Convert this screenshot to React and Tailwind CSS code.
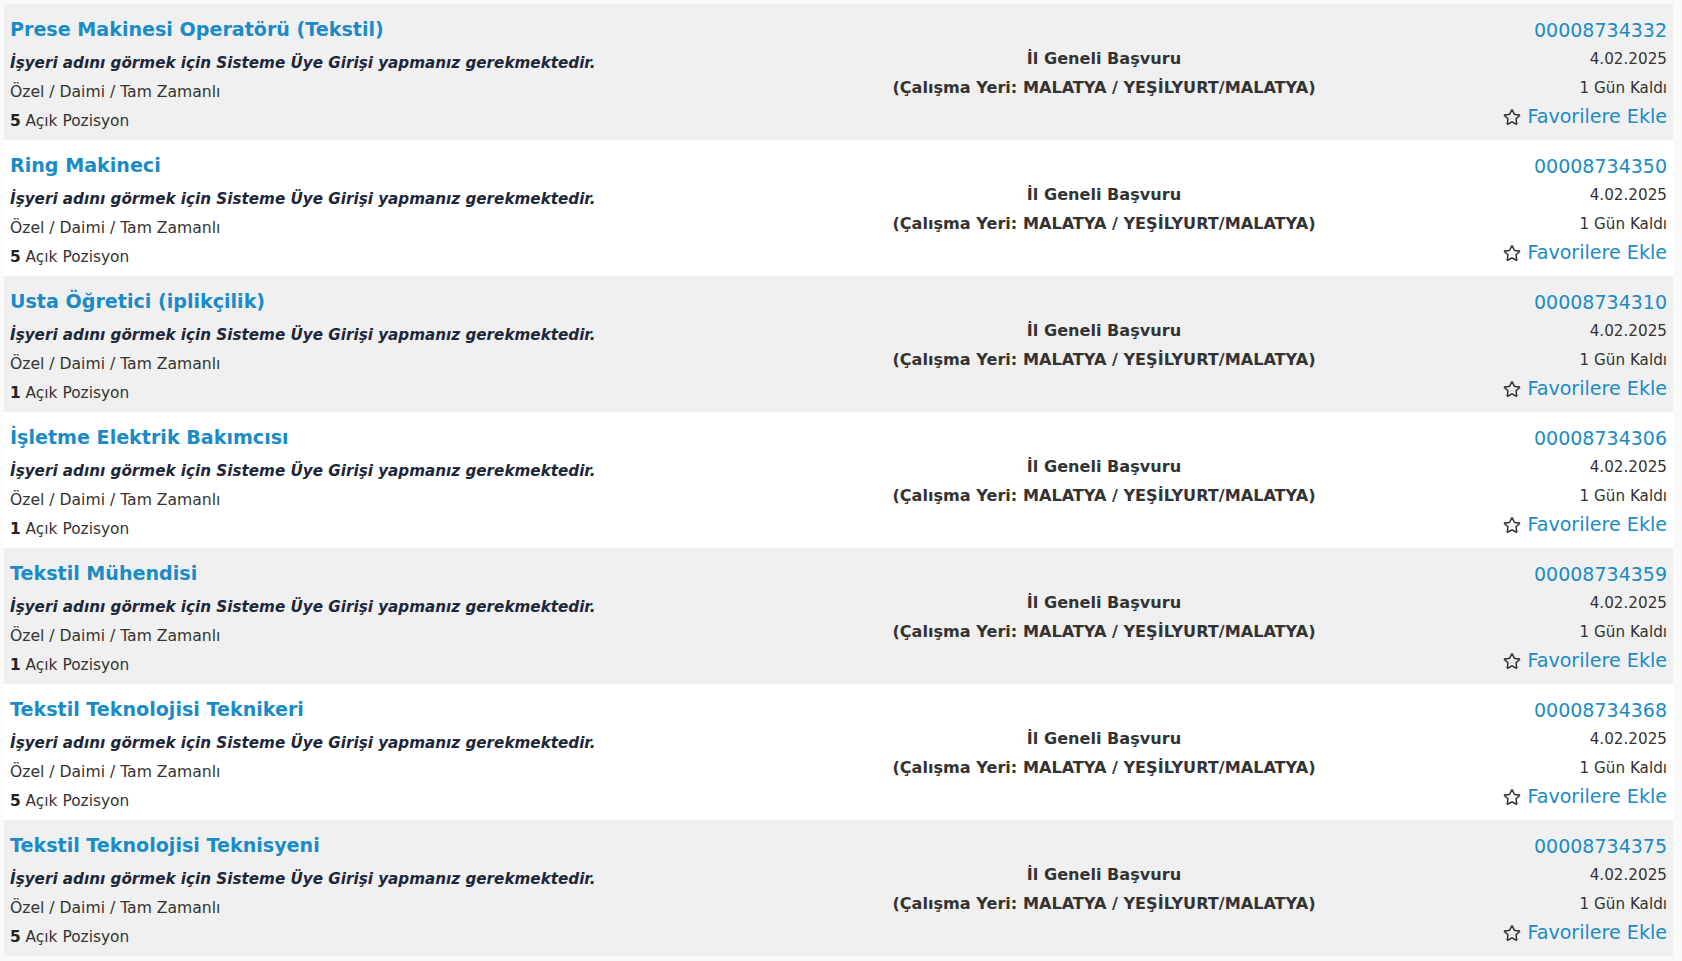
import React from 'react';
import { FaRegStar } from 'react-icons/fa';

const jobs = [
    { title: 'Prese Makinesi Operatörü (Tekstil)', id: '00008734332', count: 5 },
    { title: 'Ring Makineci', id: '00008734350', count: 5 },
    { title: 'Usta Öğretici (iplikçilik)', id: '00008734310', count: 1 },
    { title: 'İşletme Elektrik Bakımcısı', id: '00008734306', count: 1 },
    { title: 'Tekstil Mühendisi', id: '00008734359', count: 1 },
    { title: 'Tekstil Teknolojisi Teknikeri', id: '00008734368', count: 5 },
    { title: 'Tekstil Teknolojisi Teknisyeni', id: '00008734375', count: 5 },
];

const JobRow = ({ job, odd }) => (
    <div
        className={`grid grid-cols-[821px_546px_1fr] h-[136px] px-[6px] ${odd ? 'bg-[#f0f0f0]' : 'bg-white'}`}
    >
        <div className="pt-[11px]">
            <a href="#" className="block text-[19.1px] leading-[30px] font-bold text-[#1a8bc6] whitespace-nowrap">
                {job.title}
            </a>
            <div className="mt-[4px] text-[15.2px] leading-[29px] font-bold italic text-[#1c2739] whitespace-nowrap">
                İşyeri adını görmek için Sisteme Üye Girişi yapmanız gerekmektedir.
            </div>
            <div className="text-[15.6px] leading-[29px] text-[#333]">Özel / Daimi / Tam Zamanlı</div>
            <div className="text-[15.4px] leading-[29px] text-[#333]">
                <span className="font-bold text-[#222]">{job.count}</span> Açık Pozisyon
            </div>
        </div>

        <div className="pt-[40px] text-center font-bold text-[16.1px] leading-[29px] text-[#333] whitespace-nowrap">
            <div>İl Geneli Başvuru</div>
            <div>(Çalışma Yeri: MALATYA / YEŞİLYURT/MALATYA)</div>
        </div>

        <div className="pt-[12px] text-right">
            <a href="#" className="block text-[19px] leading-[29px] text-[#1a8bc6]">
                {job.id}
            </a>
            <div className="text-[15.2px] leading-[29px] text-[#333]">4.02.2025</div>
            <div className="text-[15.2px] leading-[29px] text-[#333]">1 Gün Kaldı</div>
            <a href="#" className="flex items-center justify-end gap-[6px] text-[19.1px] leading-[28px] text-[#1a8bc6]">
                <FaRegStar className="text-[#333] w-[18px] h-[18px]" />
                <span>Favorilere Ekle</span>
            </a>
        </div>
    </div>
);

export default function App() {
    return (
        <div
            className="min-h-[961px] bg-[#fafafa] pt-[4px] pl-[4px] pr-[9px]"
            style={{ fontFamily: '"DejaVu Sans", Verdana, sans-serif' }}
        >
            {jobs.map((job, i) => (
                <JobRow key={job.id} job={job} odd={i % 2 === 0} />
            ))}
        </div>
    );
}
